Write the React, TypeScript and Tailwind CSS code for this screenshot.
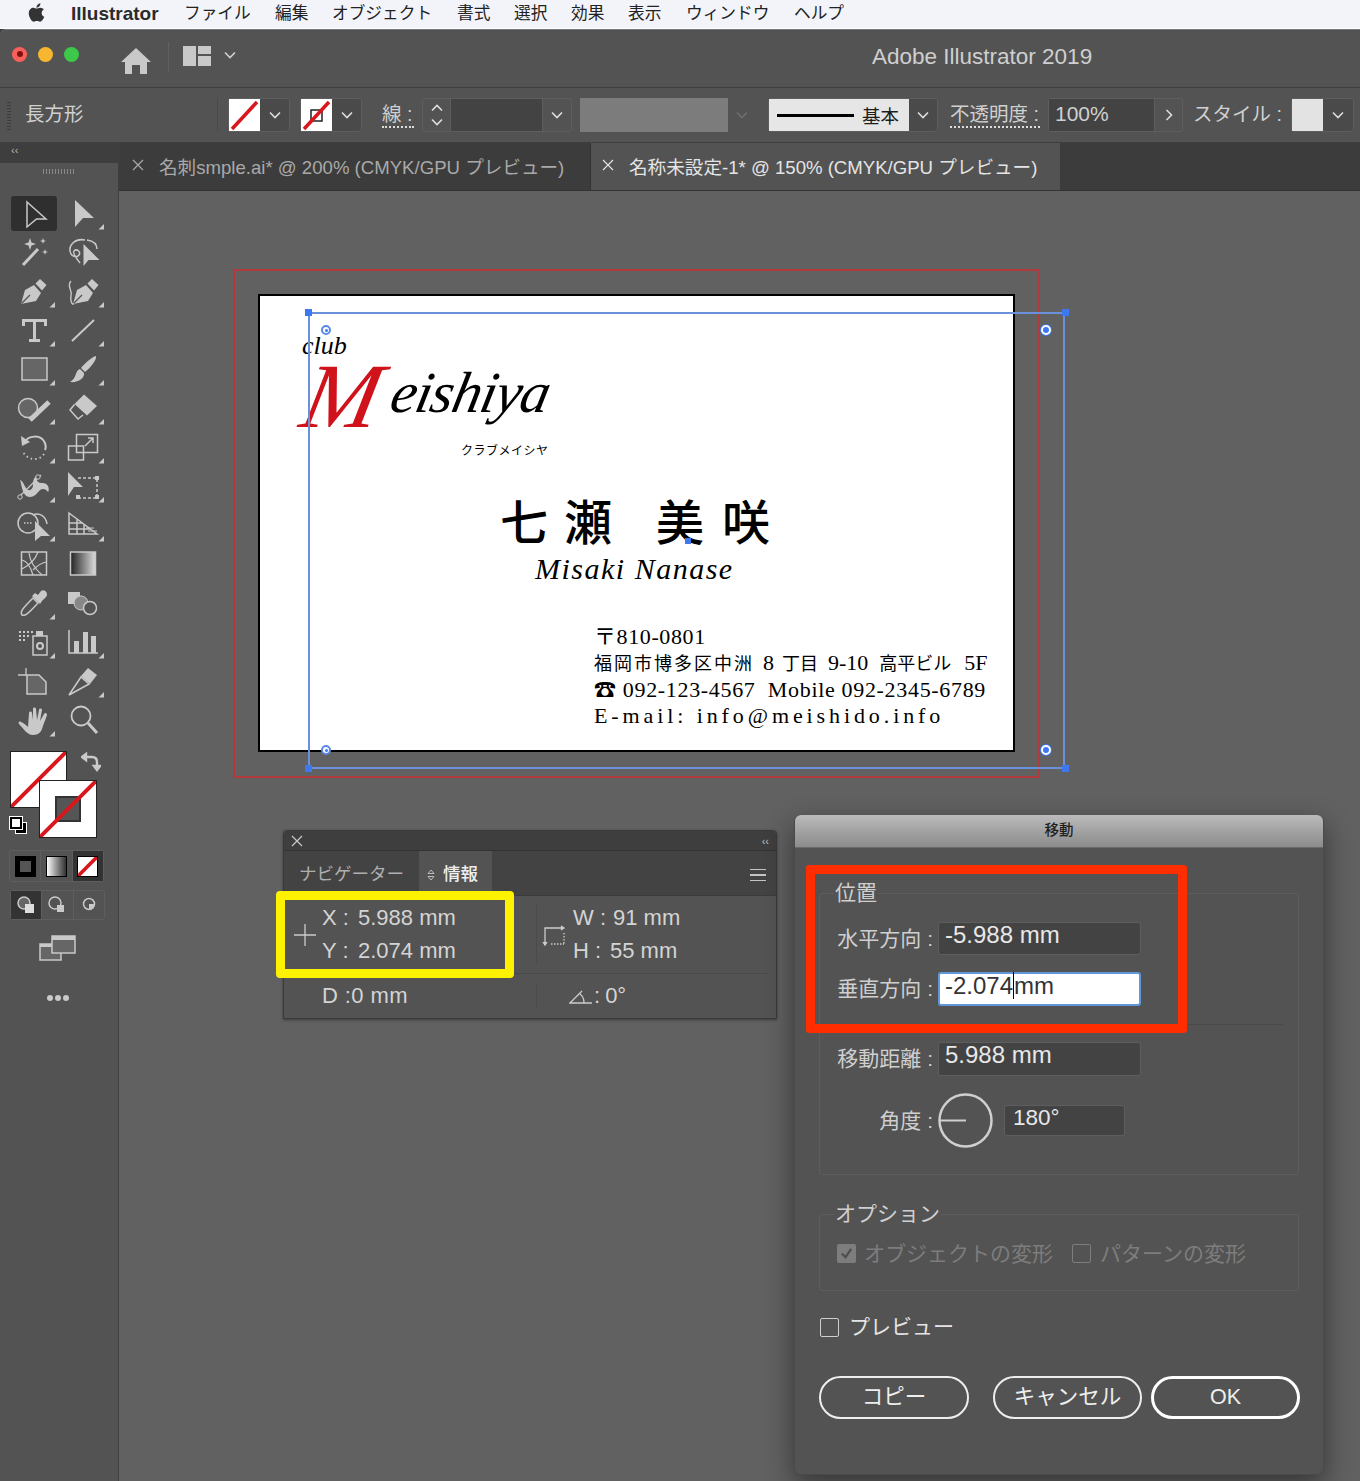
import type { ReactNode } from "react";
import { FaApple } from "react-icons/fa";

const FONT = "font-['Liberation_Sans','Noto_Sans_CJK_JP',sans-serif]";

function Chevron({ className = "" }: { className?: string }) {
  return (
    <svg viewBox="0 0 12 8" className={`w-[12px] h-[8px] ${className}`} fill="none" stroke="currentColor" strokeWidth="1.6">
      <path d="M1 1.5 6 6.5 11 1.5" />
    </svg>
  );
}

const Corner = () => <path d="M44 30v5.5h-5.5z" fill="currentColor" />;

const nib = (
  <>
    <path d="M10 32 14 18 23 13 30 21 25 29Z" fill="currentColor" />
    <path d="M10.5 31.5 19 23" stroke="#535353" strokeWidth="1.2" />
    <path d="M24.5 11.5 29 7 35.5 13 31 18.5Z" fill="currentColor" />
  </>
);

const tools: ReactNode[] = [
  <path d="M16 8 35 25H25.5L16 33Z" fill="none" stroke="currentColor" strokeWidth="1.5" />,
  <><path d="M15 6 34 24H23L15 33Z" fill="currentColor" /><Corner /></>,
  <>
    <path d="M12 32 27 16" stroke="currentColor" strokeWidth="3" />
    <path d="M19 5l1.5 4.5L25 11l-4.5 1.5L19 17l-1.5-4.5L13 11l4.5-1.5z M32 5l.8 2.2L35 8l-2.2.8L32 11l-.8-2.2L29 8l2.2-.8z M34 16l.7 2.3 2.3.7-2.3.7-.7 2.3-.7-2.3-2.3-.7 2.3-.7z" fill="currentColor" />
  </>,
  <>
    <path d="M25 7C15 5 9 12 10 18c1 6 7 7 9 4 2-3-2-7-5-4-2 2 3 8 6 12M27 7c6 1 10 4 10 9" fill="none" stroke="currentColor" strokeWidth="1.5" />
    <path d="M23.5 11 39.5 27H28.5L23.5 33Z" fill="currentColor" />
  </>,
  <>{nib}<Corner /></>,
  <>
    <g transform="translate(3 0)">{nib}</g>
    <path d="M11 9C6 14 13 18 11 24c-1 5 1 9 3 8" fill="none" stroke="currentColor" strokeWidth="1.4" />
    <Corner />
  </>,
  <><path d="M12.5 15V9.5H34.5V15M23.5 9.5V29M18 29.5H29" fill="none" stroke="currentColor" strokeWidth="3" /><Corner /></>,
  <><path d="M12 30 34 9" stroke="currentColor" strokeWidth="2" /><Corner /></>,
  <><rect x="11" y="8" width="25" height="22" fill="#666" stroke="currentColor" strokeWidth="1.5" /><Corner /></>,
  <>
    <path d="M36 6c1 4-6 12-11 16l-4-4c4-5 11-11 15-12Z" fill="currentColor" />
    <path d="M20 19c-5 1-3 9-10 13 8 1 15-4 14-9Z" fill="currentColor" />
    <Corner />
  </>,
  <>
    <circle cx="17" cy="19" r="9.5" fill="#666" stroke="currentColor" strokeWidth="1.5" />
    <path d="M19 31 38 13" stroke="currentColor" strokeWidth="5" />
    <Corner />
  </>,
  <>
    <path d="M24 5.5 37 17 27 26.5 14.5 15Z" fill="currentColor" />
    <path d="M14.5 15.5 10 21 18 30 23 26" fill="none" stroke="currentColor" strokeWidth="1.5" />
    <Corner />
  </>,
  <>
    <path d="M13 15C17 7 30 6 34 15c1 3 1 5 0 7" fill="none" stroke="currentColor" strokeWidth="2" />
    <path d="M10 8 11 18 19 14Z" fill="currentColor" />
    <path d="M33 26C29 33 17 33 12 24" fill="none" stroke="currentColor" strokeWidth="1.8" strokeDasharray="1.5 3" />
    <Corner />
  </>,
  <>
    <rect x="8.5" y="18" width="15" height="14" fill="none" stroke="currentColor" strokeWidth="1.5" />
    <rect x="16.5" y="6.5" width="21" height="18" fill="none" stroke="currentColor" strokeWidth="1.5" />
    <path d="M25 18 33 10M28 10h5v5" fill="none" stroke="currentColor" strokeWidth="1.5" />
    <Corner />
  </>,
  <>
    <path d="M8 30 30 8" stroke="currentColor" strokeWidth="1.2" />
    <path d="M9 13c3 1 4 5 6 8 3 4 6 2 7-2 0-4 0-7 3-10 0 4 2 7 5 7 3 0 5 0 7 3 1 2 1 5 0 6-2-3-5-4-8-2-3 3-5 7-10 7-5 0-7-5-8-9-1-3-1-6-2-8Z" fill="currentColor" />
    <circle cx="9" cy="30" r="2.2" fill="#535353" stroke="currentColor" />
    <circle cx="27" cy="10" r="2.2" fill="#535353" stroke="currentColor" />
    <Corner />
  </>,
  <>
    <path d="M8 5 23 20H14L8 29Z" fill="currentColor" />
    <path d="M18 11H37V31H18" fill="none" stroke="currentColor" strokeWidth="1.5" strokeDasharray="3 2" />
    <rect x="16" y="28" width="4" height="4" fill="currentColor" />
    <rect x="35" y="9" width="4" height="4" fill="currentColor" />
    <rect x="35" y="28" width="4" height="4" fill="currentColor" />
    <Corner />
  </>,
  <>
    <circle cx="17" cy="17" r="10" fill="none" stroke="currentColor" strokeWidth="1.5" />
    <path d="M22 9c6-3 13 1 14 9" fill="none" stroke="currentColor" strokeWidth="1.5" />
    <path d="M13 17h8" stroke="currentColor" strokeWidth="1.5" strokeDasharray="1.5 1.5" />
    <path d="M24 15 39 30H30L24 35Z" fill="currentColor" />
    <Corner />
  </>,
  <>
    <path d="M9 7 37 28H9ZM9 17H23M9 23H31M17 13V28M24 18V28" fill="none" stroke="currentColor" strokeWidth="1.5" />
    <path d="M26 22H34M28 25H37" stroke="currentColor" strokeWidth="1" />
    <Corner />
  </>,
  <>
    <rect x="10.5" y="7" width="25" height="23" fill="none" stroke="currentColor" strokeWidth="1.5" />
    <path d="M11 24C19 20 24 15 27 7M18 8c1 8 5 15 13 22M11 15c5 1 8 5 11 15M35 17c-5 1-9 4-13 8" fill="none" stroke="currentColor" strokeWidth="1.2" />
  </>,
  <rect x="10.5" y="7" width="25" height="23" fill="url(#tool-grad)" stroke="currentColor" strokeWidth="1.5" />,
  <>
    <path d="M11 31C9 28 10 26 22 14l5 5C16 31 14 32 11 31Z" fill="none" stroke="currentColor" strokeWidth="1.5" />
    <path d="M21 12 29 20 31 17 35 13C38 10 34 4 30 7L27 11 24 9Z" fill="currentColor" />
    <Corner />
  </>,
  <>
    <rect x="8" y="8" width="12" height="12" fill="currentColor" />
    <circle cx="21" cy="19" r="7" fill="#888" stroke="currentColor" />
    <circle cx="30" cy="24" r="6.5" fill="#535353" stroke="currentColor" strokeWidth="1.5" />
  </>,
  <>
    <path d="M8 8h2v2H8zM12 8h2v2h-2zM16 8h2v2h-2zM20 8h2v2h-2zM8 12h2v2H8zM12 12h2v2h-2zM16 12h2v2h-2zM8 16h2v2H8zM12 16h2v2h-2z" fill="currentColor" />
    <rect x="22" y="13" width="14" height="19" fill="none" stroke="currentColor" strokeWidth="1.5" />
    <rect x="25" y="8" width="7" height="5" fill="currentColor" />
    <circle cx="29" cy="23" r="3" fill="none" stroke="currentColor" strokeWidth="2" />
    <Corner />
  </>,
  <>
    <path d="M9 7V30H38" fill="none" stroke="currentColor" strokeWidth="1.5" />
    <rect x="14" y="18" width="5" height="12" fill="currentColor" />
    <rect x="23" y="9" width="5" height="21" fill="currentColor" />
    <rect x="31" y="13" width="5" height="17" fill="currentColor" />
    <Corner />
  </>,
  <>
    <path d="M7 13H15M15 6V14" stroke="currentColor" strokeWidth="1.3" />
    <path d="M16 13H28L35 20V32H16Z" fill="#666" stroke="currentColor" strokeWidth="1.5" />
  </>,
  <>
    <path d="M9 33 21 15 29 22Z" fill="none" stroke="currentColor" strokeWidth="1.5" />
    <path d="M21 14 28 6 37 13 30 22Z" fill="currentColor" />
    <Corner />
  </>,
  <>
    <path d="M10 21c3 1 5 3 7 5l1-14c0-2 3-2 3 0l1 7 0-11c0-2 3-2 3 0l1 11 2-10c0-2 3-2 3 0l-2 11 4-7c1-2 3-1 3 1-2 6-4 10-5 14-1 3-4 6-9 6-6 0-9-6-14-11-1-2 0-3 2-2Z" fill="currentColor" />
    <Corner />
  </>,
  <>
    <circle cx="21" cy="15" r="9.5" fill="none" stroke="currentColor" strokeWidth="1.8" />
    <path d="M28 22 37 32" stroke="currentColor" strokeWidth="3" />
  </>,
];

function ToolGrid() {
  return (
    <div className="ml-[11px] mt-[20px] grid grid-cols-[46px_46px] auto-rows-[39px] gap-x-[3px] text-[#c9c9c9]">
      {tools.map((icon, i) => (
        <div key={i} className={i === 0 ? "rounded-[3px] bg-[#2f2f2f] my-[2px] w-[46px] h-[35px] flex items-center" : "flex items-center"}>
          <svg viewBox="0 0 46 39" className="w-[46px] h-[39px] shrink-0">
            <defs>
              <linearGradient id="tool-grad">
                <stop offset="0" stopColor="#222" />
                <stop offset="1" stopColor="#ddd" />
              </linearGradient>
            </defs>
            {icon}
          </svg>
        </div>
      ))}
    </div>
  );
}

function ColorSwatches() {
  return (
    <div className="relative ml-[10px] mt-[11px] h-[88px] w-[100px]">
      <div className="absolute left-0 top-0 w-[57px] h-[57px] bg-white border border-[#222]">
        <svg viewBox="0 0 57 57" className="w-full h-full"><path d="M0 57 57 0" stroke="#d8161c" strokeWidth="4" /></svg>
      </div>
      <div className="absolute left-[29px] top-[29px] w-[58px] h-[58px] bg-white border border-[#222] flex items-center justify-center">
        <div className="w-[26px] h-[26px] bg-[#555] border-2 border-[#333]" />
        <svg viewBox="0 0 57 57" className="absolute inset-0 w-full h-full"><path d="M0 57 57 0" stroke="#d8161c" strokeWidth="4" /></svg>
      </div>
      <svg viewBox="0 0 20 20" className="absolute left-[71px] top-[1px] w-[20px] h-[20px] text-[#c9c9c9]" fill="none" stroke="currentColor" strokeWidth="2.4">
        <path d="M3 5h8c3 0 5 2 5 5v6M1 5l4-3v6zM13 14l3 4 3-4z" />
      </svg>
      <div className="absolute left-0 top-[66px] w-[17px] h-[17px]">
        <div className="absolute left-[5px] top-[5px] w-[12px] h-[12px] bg-black border border-white" />
        <div className="absolute left-0 top-0 w-[12px] h-[12px] bg-white border-2 border-black outline outline-white" />
      </div>
    </div>
  );
}

function ModeButtons() {
  return (
    <>
      <div className="ml-[9px] mt-[11px] flex w-[95px] h-[32px] rounded-[3px] border border-[#5e5e5e]">
        <div className="flex-1 flex items-center justify-center">
          <div className="w-[21px] h-[21px] bg-[#555] border-[5px] border-black" />
        </div>
        <div className="flex-1 flex items-center justify-center border-x border-[#5e5e5e]">
          <div className="w-[21px] h-[21px] border border-black bg-gradient-to-r from-white to-[#333]" />
        </div>
        <div className="flex-1 flex items-center justify-center bg-[#333]">
          <svg viewBox="0 0 21 21" className="w-[21px] h-[21px] bg-white border border-black"><path d="M0 21 21 0" stroke="#d8161c" strokeWidth="4" /></svg>
        </div>
      </div>
      <div className="ml-[10px] mt-[8px] flex w-[95px] h-[30px] rounded-[3px] border border-[#5e5e5e] text-[#c9c9c9]">
        <div className="flex-1 flex items-center justify-center bg-[#333]">
          <svg viewBox="0 0 22 22" className="w-[22px] h-[22px]"><circle cx="9" cy="9" r="6" fill="#666" stroke="currentColor" strokeWidth="1.5" /><rect x="10" y="10" width="9" height="9" fill="#ddd" /></svg>
        </div>
        <div className="flex-1 flex items-center justify-center border-x border-[#5e5e5e]">
          <svg viewBox="0 0 22 22" className="w-[22px] h-[22px]"><circle cx="9" cy="9" r="6" fill="none" stroke="currentColor" strokeWidth="1.5" /><rect x="11" y="11" width="7" height="7" fill="currentColor" /></svg>
        </div>
        <div className="flex-1 flex items-center justify-center">
          <svg viewBox="0 0 22 22" className="w-[22px] h-[22px]"><circle cx="11" cy="10" r="5.5" fill="none" stroke="currentColor" strokeWidth="1.5" /><path d="M11 10h5a5 5 0 0 1-5 5.5Z" fill="currentColor" /></svg>
        </div>
      </div>
    </>
  );
}

function Toolbar() {
  return (
    <aside className="w-[119px] shrink-0 bg-[#535353] border-r border-[#3f3f3f] flex flex-col">
      <div className="h-[20px] bg-[#3e3e3e] text-[#b8b8b8] text-[11px] leading-[14px] pl-[11px]">‹‹</div>
      <div className="mx-auto mt-[6px] w-[32px] h-[5px] bg-[repeating-linear-gradient(90deg,#8a8a8a_0_1px,transparent_1px_3px)]" />
      <ToolGrid />
      <ColorSwatches />
      <ModeButtons />
      <svg viewBox="0 0 38 26" className="ml-[39px] mt-[15px] w-[38px] h-[26px]">
        <rect x="1" y="9" width="21" height="16" fill="#666" stroke="#c9c9c9" strokeWidth="1.5" />
        <rect x="1" y="9" width="21" height="3" fill="#c9c9c9" />
        <rect x="13" y="1" width="23" height="17" fill="#666" stroke="#c9c9c9" strokeWidth="1.5" />
        <rect x="13" y="1" width="23" height="4" fill="#c9c9c9" />
      </svg>
      <div className="ml-[47px] mt-[34px] flex gap-[2px]">
        <span className="w-[6px] h-[6px] rounded-full bg-[#c9c9c9]" />
        <span className="w-[6px] h-[6px] rounded-full bg-[#c9c9c9]" />
        <span className="w-[6px] h-[6px] rounded-full bg-[#c9c9c9]" />
      </div>
    </aside>
  );
}

function MenuBar() {
  const items: [string, string][] = [
    ["ファイル", "w-[67px]"],
    ["編集", "w-[33px]"],
    ["オブジェクト", "w-[101px]"],
    ["書式", "w-[33px]"],
    ["選択", "w-[33px]"],
    ["効果", "w-[33px]"],
    ["表示", "w-[34px]"],
    ["ウィンドウ", "w-[84px]"],
    ["ヘルプ", "w-[50px]"],
  ];
  return (
    <div className="h-[29px] shrink-0 bg-[#f2f4fa] border-b border-white flex items-center text-[#222] text-[16.7px]">
      <FaApple className="ml-[26px] w-[21px] h-[21px] text-[#333] -mt-[3px]" />
      <span className="ml-[24px] w-[89px] font-bold text-[19px] text-[#2b2b2b] whitespace-nowrap">Illustrator</span>
      <div className="ml-[24px] flex gap-[24px]">
        {items.map(([t, w]) => (
          <span key={t} className={`${w} whitespace-nowrap`}>{t}</span>
        ))}
      </div>
    </div>
  );
}

function TitleBar() {
  return (
    <div className="h-[58px] shrink-0 bg-[#535353] rounded-tl-[6px] border-t border-[#777] flex items-center">
      <span className="ml-[12px] -mt-[9px] w-[15px] h-[15px] rounded-full bg-[#f9605a] flex items-center justify-center">
        <span className="w-[6px] h-[6px] rounded-full bg-[#7f1010]" />
      </span>
      <span className="ml-[11px] -mt-[9px] w-[15px] h-[15px] rounded-full bg-[#f7b62f]" />
      <span className="ml-[11px] -mt-[9px] w-[15px] h-[15px] rounded-full bg-[#3cc84a]" />
      <svg viewBox="0 0 30 26" className="ml-[42px] mt-[4px] w-[30px] h-[26px] text-[#c9c9c9]" fill="currentColor">
        <path d="M15 0 30 14h-4v12h-7v-9h-8v9H4V14H0Z" />
      </svg>
      <div className="ml-[17px] -mt-[4px] w-px h-[30px] bg-[#606060]" />
      <svg viewBox="0 0 28 20" className="ml-[14px] -mt-[5px] w-[28px] h-[20px] text-[#c9c9c9]" fill="currentColor">
        <path d="M0 0h13v20H0zM15 0h13v8H15zM15 10h13v10H15z" />
      </svg>
      <Chevron className="ml-[13px] -mt-[7px] text-[#d0d0d0]" />
      <span className="ml-[636px] -mt-[3px] text-[#cfcfcf] text-[22.5px] whitespace-nowrap">Adobe Illustrator 2019</span>
    </div>
  );
}

function SwatchDrop({ children, drop = "w-[29px]" }: { children: ReactNode; drop?: string }) {
  return (
    <div className="flex h-[34px] rounded-[3px] border border-[#5e5e5e] bg-[#4a4a4a]">
      {children}
      <div className={`${drop} flex items-center justify-center text-[#ddd]`}><Chevron /></div>
    </div>
  );
}

function Dotted({ children, className = "" }: { children: ReactNode; className?: string }) {
  return <span className={`border-b-2 border-dotted border-[#ddd] leading-[24px] whitespace-nowrap ${className}`}>{children}</span>;
}

function ControlBar() {
  return (
    <div className="h-[56px] shrink-0 bg-[#535353] border-y border-[#3f3f3f] flex items-center text-[#d0d0d0] text-[19.5px]">
      <div className="ml-[7px] w-[4px] h-[30px] bg-[repeating-linear-gradient(0deg,#3c3c3c_0_1px,transparent_1px_3px)]" />
      <span className="ml-[14px] w-[192px] whitespace-nowrap">長方形</span>
      <div className="w-px h-[34px] bg-[#4a4a4a]" />
      <div className="ml-[10px]">
        <SwatchDrop>
          <svg viewBox="0 0 31 32" className="w-[31px] h-[32px] bg-white"><path d="M3 30 28 3" stroke="#d8161c" strokeWidth="3.5" /></svg>
        </SwatchDrop>
      </div>
      <div className="ml-[10px]">
        <SwatchDrop>
          <svg viewBox="0 0 31 32" className="w-[31px] h-[32px] bg-white">
            <rect x="10" y="11" width="11" height="11" fill="none" stroke="#222" strokeWidth="1.5" />
            <path d="M3 30 28 3" stroke="#d8161c" strokeWidth="3.5" />
          </svg>
        </SwatchDrop>
      </div>
      <Dotted className="ml-[20px] w-[32px]">線 :</Dotted>
      <div className="ml-[8px] flex h-[34px] w-[150px] rounded-[3px] border border-[#5e5e5e]">
        <div className="w-[28px] flex flex-col items-center justify-center gap-[6px] text-[#ddd] border-r border-[#5e5e5e]">
          <Chevron className="rotate-180" />
          <Chevron />
        </div>
        <div className="flex-1 bg-[#434343]" />
        <div className="w-[29px] flex items-center justify-center text-[#ddd] border-l border-[#5e5e5e]"><Chevron /></div>
      </div>
      <div className="ml-[8px] w-[148px] h-[34px] bg-[#7c7c7c]" />
      <div className="w-[27px] h-[34px] flex items-center justify-center text-[#6f6f6f]"><Chevron /></div>
      <div className="ml-[13px]">
        <SwatchDrop drop="w-[28px]">
          <div className="w-[140px] h-[32px] bg-[#e6e6e6] flex items-center text-[#1d1d1d] text-[18.5px]">
            <span className="ml-[8px] w-[77px] h-[3px] bg-black" />
            <span className="ml-[8px] pt-[3px]">基本</span>
          </div>
        </SwatchDrop>
      </div>
      <Dotted className="ml-[12px] w-[90px]">不透明度 :</Dotted>
      <div className="ml-[8px] flex h-[34px] w-[135px] rounded-[3px] border border-[#5e5e5e]">
        <div className="w-[105px] bg-[#434343] pl-[6px] leading-[30px] text-[21px]">100%</div>
        <div className="flex-1 flex items-center justify-center text-[#ddd] border-l border-[#5e5e5e]">
          <Chevron className="-rotate-90" />
        </div>
      </div>
      <span className="ml-[10px] w-[98px] whitespace-nowrap">スタイル :</span>
      <SwatchDrop drop="w-[30px]">
        <div className="w-[31px] h-[32px] bg-[#e3e3e3]" />
      </SwatchDrop>
    </div>
  );
}

function TabBar() {
  const CloseX = () => (
    <svg viewBox="0 0 12 12" className="w-[12px] h-[12px]" fill="none" stroke="currentColor" strokeWidth="1.2"><path d="M1 1l10 10M11 1 1 11" /></svg>
  );
  return (
    <div className="h-[48px] shrink-0 bg-[#3c3c3c] flex border-b border-[#333] text-[18.6px]">
      <div className="w-[471px] flex items-center text-[#a9a9a9]">
        <span className="ml-[13px] -mt-[4px]"><CloseX /></span>
        <span className="ml-[15px] pt-[2px] whitespace-nowrap">名刺smple.ai* @ 200% (CMYK/GPU プレビュー)</span>
      </div>
      <div className="w-[470px] flex items-center bg-[#535353] text-[#e4e4e4] border-l border-[#333]">
        <span className="ml-[11px] -mt-[4px]"><CloseX /></span>
        <span className="ml-[15px] pt-[2px] whitespace-nowrap">名称未設定-1* @ 150% (CMYK/GPU プレビュー)</span>
      </div>
    </div>
  );
}

function Artboard() {
  return (
    <>
      <div className="absolute left-[114px] top-[78px] w-[807px] h-[509px] border-2 border-[#b23a3a]" />
      <div className="absolute left-[139px] top-[103px] w-[757px] h-[458px] bg-white border-2 border-black text-black font-['Liberation_Serif','Noto_Sans_CJK_JP',serif]">
        <span className="absolute left-[42px] top-[33px] italic text-[26px] leading-[34px]">club</span>
        <span className="absolute left-[44px] top-[55px] italic text-[#d0121b] text-[92px] leading-[90px] -skew-x-12">M</span>
        <span className="absolute left-[132px] top-[62px] italic text-[58px] leading-[70px] tracking-[-1px] whitespace-nowrap -skew-x-12">eishiya</span>
        <span className="absolute left-[201px] top-[146px] font-['Noto_Sans_CJK_JP',sans-serif] text-[12px] tracking-[0.5px] leading-[16px] whitespace-nowrap">クラブメイシヤ</span>
        <div className="absolute left-[240px] top-[195px] flex font-['Noto_Sans_CJK_JP',serif] text-[48px] leading-[56px] font-medium whitespace-nowrap">
          <span>七</span>
          <span className="ml-[16px]">瀬</span>
          <span className="ml-[44px]">美</span>
          <span className="ml-[18px]">咲</span>
        </div>
        <span className="absolute left-[275px] top-[256px] italic text-[30px] leading-[34px] tracking-[1.5px] whitespace-nowrap">Misaki Nanase</span>
        <div className="absolute left-[334px] top-[328px] text-[22px] leading-[26px] whitespace-nowrap">
          <div className="tracking-[0.6px]">〒810-0801</div>
          <div className="flex items-baseline">
            <span className="text-[18px] tracking-[2px]">福岡市博多区中洲</span>
            <span className="ml-[9px]">8</span>
            <span className="ml-[8px] text-[18px]">丁目</span>
            <span className="ml-[10px]">9-10</span>
            <span className="ml-[11px] text-[18px]">高平ビル</span>
            <span className="ml-[13px]">5F</span>
          </div>
          <div className="tracking-[0.67px]">☎ 092-123-4567&nbsp;&nbsp;Mobile 092-2345-6789</div>
          <div className="tracking-[3.9px]">E-mail: info@meishido.info</div>
        </div>
      </div>
      <div className="absolute left-[189px] top-[121px] w-[757px] h-[457px] border-2 border-[#6a90dc]" />
      {[
        "left-[186px] top-[118px]",
        "left-[943px] top-[118px]",
        "left-[186px] top-[574px]",
        "left-[943px] top-[574px]",
      ].map((c) => (
        <span key={c} className={`absolute ${c} w-[7px] h-[7px] bg-[#3e78ee]`} />
      ))}
      {[
        "left-[202px] top-[134px]",
        "left-[922px] top-[134px]",
        "left-[202px] top-[554px]",
        "left-[922px] top-[554px]",
      ].map((c, i) => (
        <span key={c} className={`absolute ${c} w-[10px] h-[10px] rounded-full border-2 ${i % 2 ? "border-white bg-[#3e78ee] shadow-[0_0_0_1px_#3e78ee]" : "border-[#5a8ae8] bg-white"} flex items-center justify-center`}>
          <span className={`w-[3px] h-[3px] rounded-full ${i % 2 ? "bg-transparent" : "bg-[#3e78ee]"}`} />
        </span>
      ))}
      <span className="absolute left-[566px] top-[347px] w-[6px] h-[6px] bg-[#3e78ee]" />
    </>
  );
}

function InfoPanel() {
  return (
    <div className="absolute left-[164px] top-[639px] w-[494px] h-[189px] bg-[#535353] rounded-t-[4px] border border-[#3a3a3a] shadow-[0_1px_3px_rgba(0,0,0,0.4)] text-[#d4d4d4] flex flex-col">
      <div className="h-[20px] shrink-0 bg-[#3e3e3e] border-b border-[#333] flex items-center justify-between px-[7px] rounded-t-[4px]">
        <svg viewBox="0 0 12 12" className="w-[12px] h-[12px]" fill="none" stroke="#c9c9c9" strokeWidth="1.2"><path d="M1 1l10 10M11 1 1 11" /></svg>
        <span className="text-[11px] leading-[12px] text-[#c0c0c0]">‹‹</span>
      </div>
      <div className="h-[45px] shrink-0 bg-[#434343] border-b border-[#3c3c3c] flex items-end text-[17.5px]">
        <span className="ml-[15px] mb-[8px] w-[120px] text-[#aeaeae] whitespace-nowrap">ナビゲーター</span>
        <span className="h-[44px] w-[73px] bg-[#535353] flex items-center font-medium text-[#eee] pt-[3px]">
          <svg viewBox="0 0 8 12" className="ml-[8px] mr-[8px] w-[8px] h-[12px]" fill="none" stroke="#bbb"><path d="M4 1 7 4.5H1ZM4 11 7 7.5H1Z" /></svg>
          情報
        </span>
        <span className="ml-auto mr-[10px] mb-[14px] w-[16px] h-[12px] border-y-[1.5px] border-[#c4c4c4] flex items-center">
          <span className="w-full h-[1.5px] bg-[#c4c4c4]" />
        </span>
      </div>
      <div className="flex h-[78px] shrink-0 border-b border-[#4a4a4a] mr-[8px] text-[22px] leading-[33px]">
        <div className="w-[253px] flex items-center border-r border-[#4b4b4b] my-[8px]">
          <svg viewBox="0 0 22 22" className="ml-[10px] w-[22px] h-[22px]" fill="none" stroke="#ccc" strokeWidth="1.3"><path d="M11 0v22M0 11h22" /></svg>
          <div className="ml-[6px] -mt-[1px]">
            <div className="grid grid-cols-[36px_1fr] whitespace-nowrap"><span>X :</span><span>5.988 mm</span></div>
            <div className="grid grid-cols-[36px_1fr] whitespace-nowrap"><span>Y :</span><span>2.074 mm</span></div>
          </div>
        </div>
        <div className="flex items-center">
          <svg viewBox="0 0 24 24" className="ml-[5px] w-[24px] h-[24px]" fill="none" stroke="#ccc" strokeWidth="1.3">
            <path d="M3 21V5H20" />
            <path d="M1 19l2 3 2-3M19 3l3 2-3 2" fill="#ccc" />
            <path d="M22 10v12M9 21H22" strokeDasharray="1.5 1.5" />
          </svg>
          <div className="ml-[7px] -mt-[1px]">
            <div className="grid grid-cols-[40px_1fr] whitespace-nowrap"><span>W :</span><span>91 mm</span></div>
            <div className="grid grid-cols-[37px_1fr] whitespace-nowrap"><span>H :</span><span>55 mm</span></div>
          </div>
        </div>
      </div>
      <div className="flex flex-1 text-[22px] items-center -mt-[1px]">
        <div className="w-[253px] h-[24px] flex items-center border-r border-[#4b4b4b] pl-[38px] whitespace-nowrap tracking-[0.4px]">D :0 mm</div>
        <div className="flex items-center pl-[32px]">
          <svg viewBox="0 0 24 16" className="w-[24px] h-[16px]" fill="none" stroke="#ccc" strokeWidth="1.3"><path d="M23 15H1L13 3M11 6c3 2 4 5 4 9" /></svg>
          <span className="ml-[1px]">:</span>
          <span className="ml-[5px]">0°</span>
        </div>
      </div>
      <div className="absolute -left-[8px] top-[60px] w-[238px] h-[87px] rounded-[4px] border-[9px] border-[#fff200]" />
    </div>
  );
}

function Field({ label, children, h = "h-[33px]" }: { label: string; children: ReactNode; h?: string }) {
  return (
    <div className={`flex items-center ${h}`}>
      <span className="w-[113px] text-right whitespace-nowrap">{label} :</span>
      <div className="ml-[5px]">{children}</div>
    </div>
  );
}

const INPUT = "w-[203px] rounded-[3px] bg-[#434343] border border-[#5e5e5e] text-[#e8e8e8] pl-[6px] text-[24px] leading-[24px]";

function MoveDialog() {
  return (
    <div className="absolute left-[675px] top-[624px] w-[530px] h-[660px] rounded-[6px] bg-[#535353] border border-[#4a4a4a] shadow-[0_10px_28px_rgba(0,0,0,0.45)] text-[#cfcfcf] text-[21px]">
      <div className="-mt-[1px] h-[33px] rounded-t-[6px] bg-gradient-to-b from-[#bcbabc] to-[#8c8c8c] border-b border-[#6a6a6a] text-center text-[#1e1e1e] text-[14.5px] leading-[31px] font-medium">移動</div>
      <fieldset className="mx-[24px] mt-[31px] h-[296px] rounded-[3px] border border-[#5d5d5d]">
        <legend className="ml-[14px] px-[1px] leading-[28px]">位置</legend>
        <div className="pt-[15px] h-[48px]">
          <Field label="水平方向"><div className={`${INPUT} h-[33px]`}>-5.988 mm</div></Field>
        </div>
        <div className="mt-[17px]">
          <Field label="垂直方向" h="h-[34px]">
            <div className="w-[203px] h-[34px] rounded-[3px] bg-white border-2 border-[#5f97d8] text-[#333] pl-[5px] text-[24px] leading-[23px]">-2.074<span className="border-l border-black">mm</span></div>
          </Field>
        </div>
        <div className="mt-[18px] mx-[15px] h-px bg-[#4a4a4a]" />
        <div className="mt-[17px]">
          <Field label="移動距離" h="h-[34px]"><div className={`${INPUT} h-[34px]`}>5.988 mm</div></Field>
        </div>
        <div className="mt-[17px] flex items-center h-[55px]">
          <span className="w-[113px] text-right whitespace-nowrap">角度 :</span>
          <svg viewBox="0 0 55 55" className="ml-[5px] w-[55px] h-[55px]" fill="none" stroke="#cfcfcf" strokeWidth="2.5">
            <circle cx="27.5" cy="27.5" r="26" />
            <path d="M2 27.5H28" strokeWidth="2" />
          </svg>
          <div className="ml-[11px] w-[121px] h-[31px] rounded-[3px] bg-[#434343] border border-[#5e5e5e] text-[#e8e8e8] pl-[8px] text-[22.5px] leading-[24px]">180°</div>
        </div>
      </fieldset>
      <fieldset className="mx-[24px] mt-[25px] h-[91px] rounded-[3px] border border-[#5d5d5d]">
        <legend className="ml-[14px] px-[1px] leading-[28px] whitespace-nowrap">オプション</legend>
        <div className="mt-[10px] flex items-center text-[#7d7d7d]">
          <span className="ml-[17px] w-[19px] h-[19px] rounded-[2px] bg-[#7d7d7d] flex items-center justify-center">
            <svg viewBox="0 0 14 14" className="w-[13px] h-[13px]" fill="none" stroke="#4e4e4e" strokeWidth="2.4"><path d="M2 7l4 4 6-9" /></svg>
          </span>
          <span className="ml-[8px] w-[190px] whitespace-nowrap">オブジェクトの変形</span>
          <span className="ml-[18px] w-[19px] h-[19px] rounded-[2px] border border-[#7d7d7d]" />
          <span className="ml-[9px] whitespace-nowrap">パターンの変形</span>
        </div>
      </fieldset>
      <div className="ml-[25px] mt-[22px] h-[28px] flex items-center text-[#e4e4e4]">
        <span className="w-[19px] h-[19px] rounded-[2px] border border-[#cfcfcf]" />
        <span className="ml-[10px] whitespace-nowrap">プレビュー</span>
      </div>
      <div className="ml-[24px] mt-[35px] flex text-[#eee] text-[21.5px]">
        <span className="w-[150px] h-[43px] rounded-full border-2 border-[#eee] flex items-center justify-center">コピー</span>
        <span className="ml-[24px] w-[149px] h-[43px] rounded-full border-2 border-[#eee] flex items-center justify-center">キャンセル</span>
        <span className="ml-[9px] w-[149px] h-[43px] rounded-full border-[3px] border-white flex items-center justify-center">OK</span>
      </div>
      <div className="absolute left-[11px] top-[49px] w-[381px] h-[168px] rounded-[3px] border-[9px] border-[#ff2d00]" />
    </div>
  );
}

export default function App() {
  return (
    <div className={`w-[1360px] h-[1481px] overflow-hidden flex flex-col bg-[#3c3c3c] ${FONT}`}>
      <MenuBar />
      <TitleBar />
      <ControlBar />
      <div className="flex flex-1 min-h-0">
        <Toolbar />
        <div className="flex-1 flex flex-col">
          <TabBar />
          <main className="relative flex-1 bg-[#616161]">
            <Artboard />
            <InfoPanel />
            <MoveDialog />
          </main>
        </div>
      </div>
    </div>
  );
}
